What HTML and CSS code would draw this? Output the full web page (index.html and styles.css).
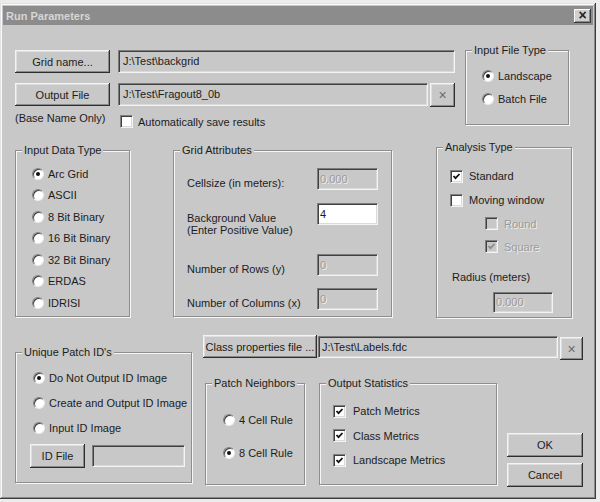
FILE: index.html
```html
<!DOCTYPE html>
<html>
    <head>
        <link rel="stylesheet" href="styles.css">
    </head>

    <body>
        <div class="window">
            <div class="titlebar">
                <span class="title">Run Parameters</span>
                <span class="close">&#215;</span>
            </div>

            <div class="content">
                <!-- File names and input file type -->
                <div class="top">
                    <div class="files">
                        <div class="filerow">
                            <button class="btn filebtn">Grid name...</button>
                            <div class="field longfield">J:\Test\backgrid</div>
                        </div>
                        <div class="filerow second">
                            <button class="btn filebtn">Output File</button>
                            <div class="field midfield">J:\Test\Fragout8_0b</div>
                            <button class="btn xbtn">&#215;</button>
                        </div>
                        <div class="noterow">
                            <span class="note">(Base Name Only)</span>
                            <span class="check autosave"><span class="box"></span>Automatically save results</span>
                        </div>
                    </div>

                    <div class="group filetype">
                        <span class="group-title">Input File Type</span>
                        <div class="opt"><span class="radio on"></span>Landscape</div>
                        <div class="opt"><span class="radio"></span>Batch File</div>
                    </div>
                </div>

                <!-- Data type, grid attributes, analysis -->
                <div class="middle">
                    <div class="group datatype">
                        <span class="group-title">Input Data Type</span>
                        <div class="opt"><span class="radio on"></span>Arc Grid</div>
                        <div class="opt"><span class="radio"></span>ASCII</div>
                        <div class="opt"><span class="radio"></span>8 Bit Binary</div>
                        <div class="opt"><span class="radio"></span>16 Bit Binary</div>
                        <div class="opt"><span class="radio"></span>32 Bit Binary</div>
                        <div class="opt"><span class="radio"></span>ERDAS</div>
                        <div class="opt"><span class="radio"></span>IDRISI</div>
                    </div>

                    <div class="group gridattr">
                        <span class="group-title">Grid Attributes</span>
                        <div class="attr">
                            <span class="attr-label">Cellsize (in meters):</span>
                            <div class="field numfield disabled">0.000</div>
                        </div>
                        <div class="attr bg">
                            <span class="attr-label">Background Value<br>(Enter Positive Value)</span>
                            <div class="field numfield white">4</div>
                        </div>
                        <div class="attr rows">
                            <span class="attr-label">Number of Rows (y)</span>
                            <div class="field numfield disabled">0</div>
                        </div>
                        <div class="attr cols">
                            <span class="attr-label">Number of Columns (x)</span>
                            <div class="field numfield disabled">0</div>
                        </div>
                    </div>

                    <div class="group analysis">
                        <span class="group-title">Analysis Type</span>
                        <div class="check tall"><span class="box"><svg viewBox="0 0 9 9"><polyline points="1.5,4 3.5,6.2 7.5,2"/></svg></span>Standard</div>
                        <div class="check tall"><span class="box"></span>Moving window</div>
                        <div class="check sub off"><span class="box"></span>Round</div>
                        <div class="check sub off"><span class="box"><svg viewBox="0 0 9 9"><polyline points="1.5,4 3.5,6.2 7.5,2"/></svg></span>Square</div>
                        <div class="radius-label">Radius (meters)</div>
                        <div class="field radius disabled">0.000</div>
                    </div>
                </div>

                <!-- Patch IDs, class file, statistics -->
                <div class="bottom">
                    <div class="group patchid">
                        <span class="group-title">Unique Patch ID's</span>
                        <div class="opt wide"><span class="radio on"></span>Do Not Output ID Image</div>
                        <div class="opt wide"><span class="radio"></span>Create and Output ID Image</div>
                        <div class="opt wide"><span class="radio"></span>Input ID Image</div>
                        <div class="idrow">
                            <button class="btn idbtn">ID File</button>
                            <div class="field idfield"></div>
                        </div>
                    </div>

                    <div class="right">
                        <div class="classrow">
                            <button class="btn classbtn">Class properties file ...</button>
                            <div class="field classfield">J:\Test\Labels.fdc</div>
                            <button class="btn xbtn small">&#215;</button>
                        </div>
                        <div class="statsrow">
                            <div class="group neighbors">
                                <span class="group-title">Patch Neighbors</span>
                                <div class="opt rule"><span class="radio"></span>4 Cell Rule</div>
                                <div class="opt rule"><span class="radio on"></span>8 Cell Rule</div>
                            </div>
                            <div class="group outstats">
                                <span class="group-title">Output Statistics</span>
                                <div class="check stat"><span class="box"><svg viewBox="0 0 9 9"><polyline points="1.5,4 3.5,6.2 7.5,2"/></svg></span>Patch Metrics</div>
                                <div class="check stat"><span class="box"><svg viewBox="0 0 9 9"><polyline points="1.5,4 3.5,6.2 7.5,2"/></svg></span>Class Metrics</div>
                                <div class="check stat"><span class="box"><svg viewBox="0 0 9 9"><polyline points="1.5,4 3.5,6.2 7.5,2"/></svg></span>Landscape Metrics</div>
                            </div>
                            <div class="actions">
                                <button class="btn okbtn">OK</button>
                                <button class="btn okbtn">Cancel</button>
                            </div>
                        </div>
                    </div>
                </div>
            </div>
        </div>
    </body>
</html>
```

FILE: styles.css
```css
* {
    box-sizing: border-box;
}

body {
    margin: 0;
    background: #ececec;
    font-family: "Liberation Sans", Arial, sans-serif;
    font-size: 11px;
    color: #1c1c1c;
}

.window {
    margin-top: 3px;
    width: 596px;
    height: 496px;
    padding: 3px;
    background: #c8c8c8;
    box-shadow: inset -1px -1px #3c3c3c, inset 1px 1px #e2e2e2, inset -2px -2px #8a8a8a, inset 2px 2px #fafafa;
}

.titlebar {
    height: 19px;
    background: #8c8c8c;
    display: flex;
    align-items: center;
    justify-content: space-between;
    padding: 0 2px 0 3px;
}

.title {
    color: #d6d6d6;
    font-weight: bold;
    font-size: 11px;
}

.close {
    width: 17px;
    height: 14px;
    background: #d0d0d0;
    box-shadow: inset -1px -1px #3c3c3c, inset 1px 1px #fafafa, inset -2px -2px #8a8a8a;
    font-weight: bold;
    font-size: 14px;
    line-height: 13px;
    text-align: center;
    color: #222;
}

.content {
    padding-left: 12px;
}

/* Shared widgets */

.btn {
    font-family: inherit;
    font-size: 11px;
    color: #1c1c1c;
    background: #c8c8c8;
    border: none;
    padding: 0;
    box-shadow: inset -1px -1px #2e2e2e, inset 1px 1px #f4f4f4, inset -2px -2px #8a8a8a, inset 2px 2px #dedede;
}

.field {
    height: 23px;
    line-height: 21px;
    padding-left: 4px;
    background: #c8c8c8;
    border-top: 1px solid #7c7c7c;
    border-left: 1px solid #7c7c7c;
    border-right: 1px solid #f4f4f4;
    border-bottom: 1px solid #f4f4f4;
    box-shadow: inset 1px 1px #404040, inset -1px -1px #dadada;
    white-space: nowrap;
    overflow: hidden;
}

.field.white {
    background: #ffffff;
}

.field.disabled {
    color: #9a9a9a;
    text-shadow: 1px 1px #eeeeee;
}

.group {
    position: relative;
    border: 1px solid #8e8e8e;
    box-shadow: 1px 1px #f6f6f6, inset 1px 1px #f6f6f6;
}

.group-title {
    position: absolute;
    top: -7px;
    left: 6px;
    padding: 0 2px;
    line-height: 13px;
    background: #c8c8c8;
    white-space: nowrap;
}

.opt {
    display: flex;
    align-items: center;
    white-space: nowrap;
}

.radio {
    position: relative;
    width: 12px;
    height: 12px;
    margin-right: 4px;
    border-radius: 50%;
    background: #ffffff;
    border: 1px solid;
    border-color: #808080 #ececec #ececec #808080;
    box-shadow: inset 1px 1px #404040;
    flex-shrink: 0;
}

.radio.on::after {
    content: "";
    position: absolute;
    left: 3px;
    top: 3px;
    width: 4px;
    height: 4px;
    border-radius: 50%;
    background: #111;
}

.check {
    display: flex;
    align-items: center;
    white-space: nowrap;
}

.box {
    width: 13px;
    height: 13px;
    margin-right: 6px;
    background: #ffffff;
    border-top: 1px solid #808080;
    border-left: 1px solid #808080;
    border-right: 1px solid #f4f4f4;
    border-bottom: 1px solid #f4f4f4;
    box-shadow: inset 1px 1px #404040, inset -1px -1px #dadada;
    display: flex;
    align-items: center;
    justify-content: center;
    flex-shrink: 0;
}

.box svg {
    width: 9px;
    height: 9px;
    fill: none;
    stroke: #111;
    stroke-width: 1.8;
}

.check.off {
    color: #9a9a9a;
    text-shadow: 1px 1px #eeeeee;
}

.check.off .box {
    background: #c8c8c8;
}

.check.off .box svg {
    stroke: #8a8a8a;
}

/* Top section */

.top {
    height: 122px;
    padding-top: 25px;
    display: flex;
    align-items: flex-start;
}

.files {
    width: 442px;
}

.filerow {
    display: flex;
    align-items: flex-start;
}

.filerow.second {
    margin-top: 10px;
}

.filebtn {
    width: 95px;
    height: 23px;
}

.longfield {
    margin-left: 8px;
    width: 337px;
}

.midfield {
    margin-left: 8px;
    width: 310px;
}

.xbtn {
    margin-left: 2px;
    width: 25px;
    height: 24px;
    font-size: 14px;
    color: #6a6a6a;
}

.noterow {
    margin-top: 5px;
    display: flex;
    align-items: flex-start;
}

.note {
    width: 105px;
    line-height: 13px;
}

.autosave {
    margin-top: 3px;
}

.autosave .box {
    margin-right: 5px;
}

.filetype {
    margin-left: 8px;
    width: 104px;
    height: 75px;
    padding: 13px 0 0 16px;
}

.filetype .opt {
    height: 23px;
}

/* Middle section */

.middle {
    height: 171px;
    display: flex;
    align-items: flex-start;
}

.datatype {
    margin-top: 3px;
    width: 115px;
    height: 167px;
    padding: 12px 0 0 16px;
}

.datatype .opt {
    height: 21.5px;
}

.gridattr {
    margin-top: 3px;
    margin-left: 43px;
    width: 219px;
    height: 167px;
    padding: 17px 0 0 13px;
}

.attr {
    display: flex;
    align-items: flex-start;
}

.attr.bg {
    margin-top: 13px;
}

.attr.rows {
    margin-top: 18px;
}

.attr.cols {
    margin-top: 12px;
}

.attr-label {
    width: 130px;
    padding-top: 9px;
    line-height: 12px;
    white-space: nowrap;
}

.numfield {
    width: 61px;
    height: 22px;
    line-height: 20px;
    padding-left: 2px;
}

.analysis {
    margin-left: 44px;
    width: 136px;
    height: 171px;
    padding: 16px 0 0 13px;
}

.check.tall {
    height: 24px;
}

.check.sub {
    height: 23px;
    padding-left: 35px;
}

.radius-label {
    margin-top: 13px;
    padding-left: 2px;
    line-height: 12px;
}

.radius {
    margin-top: 9px;
    margin-left: 43px;
    width: 60px;
    height: 21px;
    line-height: 19px;
    padding-left: 2px;
}

/* Bottom section */

.bottom {
    margin-top: 17px;
    display: flex;
    align-items: flex-start;
}

.patchid {
    margin-top: 17px;
    width: 177px;
    height: 131px;
    padding: 12px 0 0 17px;
}

.patchid .opt {
    height: 25px;
}

.idrow {
    margin-top: 4px;
    margin-left: -3px;
    display: flex;
    align-items: flex-start;
}

.idbtn {
    width: 55px;
    height: 24px;
}

.idfield {
    margin-left: 7px;
    margin-top: 1px;
    width: 93px;
    height: 22px;
    background: #c8c8c8;
}

.right {
    margin-left: 11px;
}

.classrow {
    height: 25px;
    display: flex;
    align-items: flex-start;
}

.classbtn {
    width: 114px;
    height: 23px;
}

.classfield {
    margin-left: 1px;
    margin-top: 1px;
    width: 240px;
    height: 22px;
    line-height: 20px;
    padding-left: 3px;
}

.xbtn.small {
    margin-top: 2px;
    width: 23px;
    height: 23px;
}

.statsrow {
    margin-top: 23px;
    display: flex;
    align-items: flex-start;
}

.neighbors {
    margin-left: 2px;
    width: 100px;
    height: 102px;
    padding: 19px 0 0 17px;
}

.neighbors .opt {
    height: 33px;
}

.outstats {
    margin-left: 14px;
    width: 178px;
    height: 102px;
    padding: 15px 0 0 13px;
}

.check.stat {
    height: 24.5px;
}

.check.stat .box {
    margin-right: 7px;
}

.actions {
    margin-left: 10px;
    padding-top: 50px;
    display: flex;
    flex-direction: column;
    gap: 6px;
}

.okbtn {
    width: 76px;
    height: 24px;
}
```
